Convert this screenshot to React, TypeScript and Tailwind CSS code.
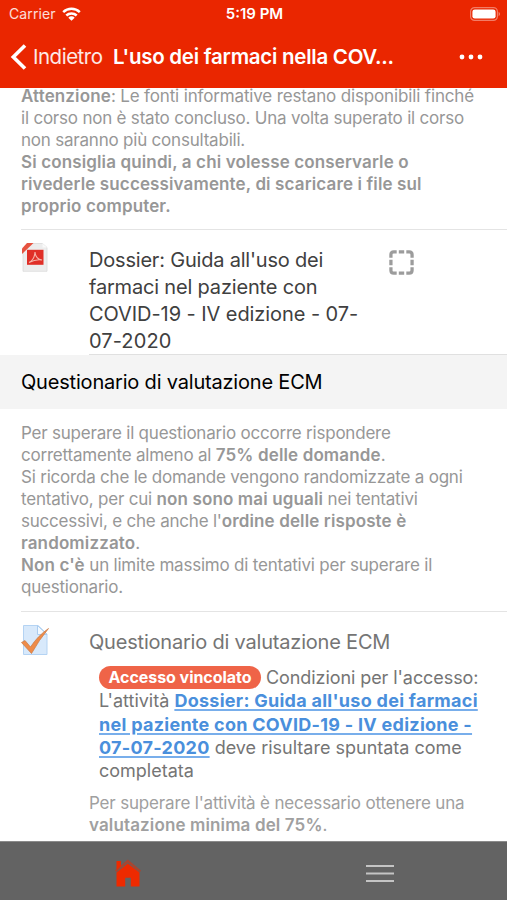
import type { ReactNode } from "react";

const hint = "text-[17px] leading-[22px] tracking-[-0.21px] text-[#979797] whitespace-nowrap";

export default function App() {
  return (
    <div className="flex h-[900px] w-[507px] flex-col overflow-hidden bg-white font-['Inter','Liberation_Sans',sans-serif]">
      <Header />

      <main className="flex-1 overflow-hidden">
        <div className={`${hint} -mt-[3px] pl-[21px]`}>
          <Line className="tracking-[-0.15px]"><Strong>Attenzione</Strong>: Le fonti informative restano disponibili finché</Line>
          <Line>il corso non è stato concluso. Una volta superato il corso</Line>
          <Line>non saranno più consultabili.</Line>
          <Line><Strong>Si consiglia quindi, a chi volesse conservarle o</Strong></Line>
          <Line><Strong>rivederle successivamente, di scaricare i file sul</Strong></Line>
          <Line><Strong>proprio computer.</Strong></Line>
        </div>

        <section className="ml-[21px] mt-3 flex h-[126px] border-t border-[#e4e4e4]">
          <PdfIcon />
          <div className="ml-[41px] flex flex-1 border-b border-[#e0e0e0] pt-[17px] text-xl leading-[27px] text-[#404040]">
            <h2 className="w-[300px] whitespace-nowrap">
              <Line className="tracking-[-0.2px]">Dossier: Guida all'uso dei</Line>
              <Line className="tracking-[-0.18px]">farmaci nel paziente con</Line>
              <Line className="tracking-[-0.07px]">COVID-19 - IV edizione - 07-</Line>
              <Line className="tracking-[0.1px]">07-2020</Line>
            </h2>
            <CheckBox />
          </div>
        </section>

        <h2 className="flex h-[54px] items-center bg-[#f4f4f4] pl-[21px] text-xl tracking-[-0.19px] text-black">
          <span>Questionario di valutazione ECM</span>
        </h2>

        <div className={`${hint} mt-[13px] pl-[21px]`}>
          <Line>Per superare il questionario occorre rispondere</Line>
          <Line>correttamente almeno al <Strong>75% delle domande</Strong>.</Line>
          <Line>Si ricorda che le domande vengono randomizzate a ogni</Line>
          <Line>tentativo, per cui <Strong>non sono mai uguali</Strong> nei tentativi</Line>
          <Line>successivi, e che anche l'<Strong>ordine delle risposte è</Strong></Line>
          <Line><Strong>randomizzato</Strong>.</Line>
          <Line><Strong>Non c'è</Strong> un limite massimo di tentativi per superare il</Line>
          <Line>questionario.</Line>
        </div>

        <section className="ml-[21px] mt-[13px] flex border-t border-[#e4e4e4]">
          <QuizIcon />
          <div className="ml-10 flex-1 whitespace-nowrap">
            <h3 className="mt-[17px] text-xl leading-[27px] tracking-[-0.2px] text-[#757575]">Questionario di valutazione ECM</h3>
            <div className="ml-[10px] mt-[10px] text-lg leading-[23.3px] text-[#757575]">
              <div className="flex items-center">
                <span className="mr-[5px] h-[23px] w-[162px] rounded-full bg-[#ef6448] text-center text-base font-bold leading-[23px] tracking-[-0.05px] text-white">Accesso vincolato</span>
                <span className="tracking-[-0.08px]">Condizioni per l'accesso:</span>
              </div>
              <Line>L'attività <Link>Dossier: Guida all'uso dei farmaci</Link></Line>
              <Line><Link>nel paziente con COVID-19 - IV edizione -</Link></Line>
              <Line><Link>07-07-2020</Link> deve risultare spuntata come</Line>
              <Line>completata</Line>
            </div>
            <div className="mt-[10px] text-[17px] leading-[22px] tracking-[-0.17px] text-[#a0a0a0]">
              <Line>Per superare l'attività è necessario ottenere una</Line>
              <Line><Strong>valutazione minima del 75%</Strong>.</Line>
            </div>
          </div>
        </section>
      </main>

      <TabBar />
    </div>
  );
}

function Line({ children, className = "" }: { children: ReactNode; className?: string }) {
  return <div className={className}>{children}</div>;
}

function Strong({ children }: { children: ReactNode }) {
  return <b className="font-semibold tracking-[0.13px]">{children}</b>;
}

function Link({ children }: { children: ReactNode }) {
  return <a className="font-bold tracking-[0.27px] text-[#4a8fdc] underline decoration-[#78aeeb] decoration-2 underline-offset-2">{children}</a>;
}

function Header() {
  return (
    <header className="h-[88px] shrink-0 bg-[#ea2600] text-white">
      <div className="grid h-7 grid-cols-3 items-center pl-[9px] pr-[7px] text-sm leading-7">
        <div className="flex items-center gap-[6px] tracking-[0.1px] text-white/85">
          <span>Carrier</span>
          <svg width="19" height="14" viewBox="0 0 19 14" fill="none" stroke="#fff" strokeWidth="2.5">
            <path d="M1.2 5.2a12 12 0 0 1 16.6 0M4.3 8.5a7.5 7.5 0 0 1 10.4 0" />
            <path d="M9.5 13.8 6.300 10.700a4.500 4.500 0 0 1 6.400 0z" fill="#fff" stroke="none" />
          </svg>
        </div>
        <span className="text-center text-[15px] font-semibold">5:19 PM</span>
        <svg className="justify-self-end" width="30" height="14" viewBox="0 0 30 14">
          <rect x=".6" y=".6" width="26.8" height="12.8" rx="4" fill="none" stroke="#fff" strokeOpacity=".4" strokeWidth="1.2" />
          <rect x="2.4" y="2.4" width="23.2" height="9.2" rx="2.4" fill="#fff" />
          <path d="M28.6 4.8q1.4.7 1.4 2.2t-1.4 2.2z" fill="#fff" fillOpacity=".45" />
        </svg>
      </div>
      <div className="flex h-[58px] items-center whitespace-nowrap">
        <svg className="ml-[10px]" width="17" height="26" viewBox="0 0 17 26" fill="none" stroke="#fff" strokeWidth="3.6">
          <path d="M15 1.5 3.3 13 15 24.5" />
        </svg>
        <span className="ml-[6px] w-[80px] text-[20.5px] tracking-[-0.5px] text-white/90">Indietro</span>
        <h1 className="w-[346px] text-[20.5px] font-semibold tracking-[-0.26px]">L'uso dei farmaci nella COV...</h1>
        <svg width="26" height="6" viewBox="0 0 26 6" fill="#fff">
          <circle cx="3" cy="3" r="2.4" />
          <circle cx="12" cy="3" r="2.4" />
          <circle cx="21" cy="3" r="2.4" />
        </svg>
      </div>
    </header>
  );
}

function TabBar() {
  return (
    <nav className="flex h-[59px] shrink-0 border-t border-[#8b8b8b] bg-[#636363]">
      <div className="flex w-1/2 justify-center pl-[2px] pt-[17px]">
        <svg width="26" height="28" viewBox="0 0 26 28">
          <path d="M0 11.5 12.8.5 26 11.5l-1.3 1.8L12.8 3.6 1.4 13z" fill="#ee2a00" fillOpacity=".5" />
          <path d="M1.5 2H6v5l-4.500 4z" fill="#ee2a00" />
          <path d="M12.800 4.500 24.500 13.500v14h-8.700v-8.700h-5.600v8.700H1.500v-14z" fill="#ee2a00" />
        </svg>
      </div>
      <div className="flex w-1/2 justify-center pt-[22px]">
        <svg width="28" height="18" viewBox="0 0 28 18" stroke="#c4c4c4" strokeWidth="2">
          <path d="M0 2h28M0 9.500h28M0 17h28" />
        </svg>
      </div>
    </nav>
  );
}

function PdfIcon() {
  return (
    <svg className="mt-[13px]" width="27" height="29" viewBox="0 0 27 29">
      <path d="M8 .5h13.500l4.500 4V28.300H2V8z" fill="#ededed" stroke="#dadada" strokeWidth=".8" />
      <path d="M21.500.5v4H26z" fill="#fafafa" />
      <path d="M6 0h6.500L1 11V5.500z" fill="#e65340" />
      <rect x="6" y="6.800" width="16.500" height="15" fill="#e02f27" />
      <path d="M8 19.500c3-1.500 5.700-5.500 6-10.500.3 4.500 3 8 7 8-4-.8-8.500.2-13 2.500z" fill="none" stroke="#f6b5aa" strokeWidth="1.100" />
    </svg>
  );
}

function CheckBox() {
  return (
    <svg className="mt-[3px]" width="25" height="25" viewBox="0 0 26 26" fill="none" stroke="#9c9c9c" strokeWidth="3.4">
      <path d="M2 8V5q0-3 3-3h3M18 2h3q3 0 3 3v3M24 18v3q0 3-3 3h-3M8 24H5q-3 0-3-3v-3M10.200 2h5.600M10.200 24h5.600M2 10.200v5.600M24 10.200v5.600" />
    </svg>
  );
}

function QuizIcon() {
  return (
    <svg className="mt-[13px]" width="28" height="30" viewBox="0 0 28 30">
      <path d="M2.500.500h14.500l9 8.500V29.500h-23.500z" fill="#d8e9fb" stroke="#b4d3f3" />
      <path d="M16.500.500v9H26z" fill="#f3f9ff" stroke="#abcdf0" />
      <path d="M.500 17.500 4 15.500l5.500 6.500Q17 10.500 27.500 3.500 18 15 10.500 28.500z" fill="#ee8b49" stroke="#c97a45" strokeWidth=".7" />
    </svg>
  );
}
